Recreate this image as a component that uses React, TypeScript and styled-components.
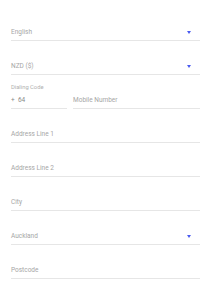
import React from 'react';
import styled, { createGlobalStyle } from 'styled-components';

const GlobalStyle = createGlobalStyle`
  body {
    margin: 0;
    background: #ffffff;
    font-family: Roboto, "Liberation Sans", Arial, sans-serif;
  }
`;

const Form = styled.div`
  display: flex;
  flex-direction: column;
  gap: 17px;
  padding: 24px 10px 0 11px;
`;

const Field = styled.div`
  display: flex;
  align-items: center;
  justify-content: space-between;
  height: 16px;
  border-bottom: 1px solid #e6e6e6;
`;

const Text = styled.span<{ $dark?: boolean }>`
  font-size: 6.5px;
  color: ${(p) => (p.$dark ? '#8a8a8a' : '#a6a6a6')};
  line-height: 1;
`;

const Arrow = styled.span`
  width: 0;
  height: 0;
  margin-right: 9px;
  border-left: 2.5px solid transparent;
  border-right: 2.5px solid transparent;
  border-top: 3.5px solid #4a5af0;
`;

const PhoneRow = styled.div`
  display: flex;
  gap: 6px;
  margin-top: -9px;
`;

const DialBox = styled.div`
  width: 56px;
  display: flex;
  flex-direction: column;
`;

const Label = styled.span`
  font-size: 5.8px;
  color: #b0b0b0;
  height: 9px;
  line-height: 9px;
`;

const MobileBox = styled.div`
  flex: 1;
  display: flex;
  flex-direction: column;
  justify-content: flex-end;
`;

const Select = ({ value }: { value: string }) => (
  <Field>
    <Text>{value}</Text>
    <Arrow />
  </Field>
);

const Input = ({ placeholder }: { placeholder: string }) => (
  <Field>
    <Text>{placeholder}</Text>
  </Field>
);

export default function App() {
  return (
    <>
      <GlobalStyle />
      <Form>
        <Select value="English" />
        <Select value="NZD ($)" />
        <PhoneRow>
          <DialBox>
            <Label>Dialing Code</Label>
            <Field>
              <Text $dark>+&nbsp;&nbsp;64</Text>
            </Field>
          </DialBox>
          <MobileBox>
            <Field>
              <Text>Mobile Number</Text>
            </Field>
          </MobileBox>
        </PhoneRow>
        <Input placeholder="Address Line 1" />
        <Input placeholder="Address Line 2" />
        <Input placeholder="City" />
        <Select value="Auckland" />
        <Input placeholder="Postcode" />
      </Form>
    </>
  );
}
